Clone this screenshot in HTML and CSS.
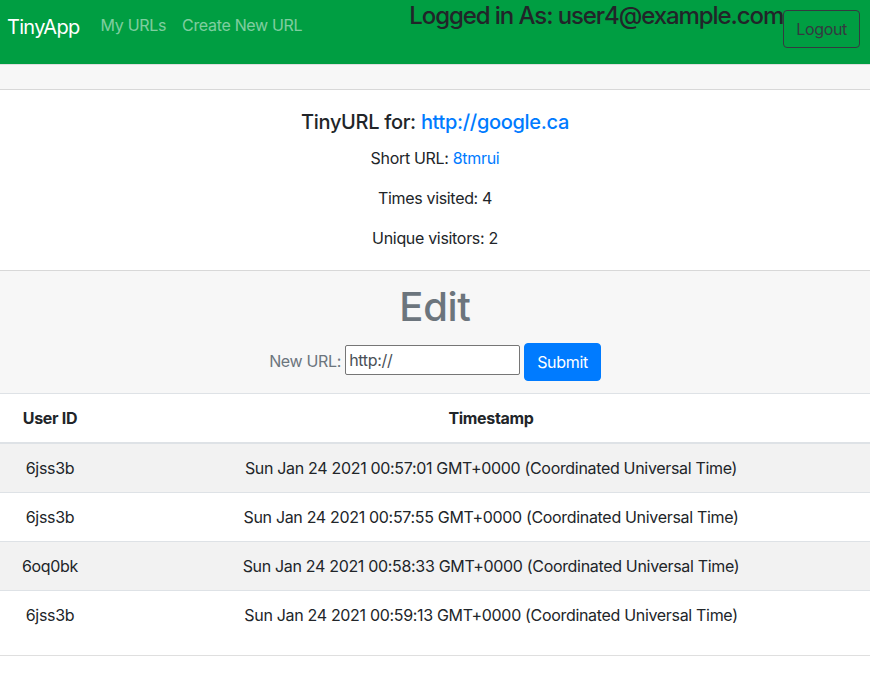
FILE: index.html
```html
<!DOCTYPE html>
<html lang="en">
<head>
<meta charset="utf-8">
<title>TinyApp</title>
<link rel="stylesheet" href="styles.css">
</head>
<body>
<nav class="navbar">
  <a class="brand" href="#">TinyApp</a>
  <div class="nav-links">
    <a class="nav-link" href="#">My URLs</a>
    <a class="nav-link" href="#">Create New URL</a>
  </div>
  <div class="nav-right">
    <h4 class="logged">Logged in As: user4@example.com</h4>
    <button class="btn btn-outline-dark" type="button">Logout</button>
  </div>
</nav>

<div class="card">
  <div class="card-header"></div>
  <div class="card-body">
    <h5 class="card-title">TinyURL for: <a href="#">http://google.ca</a></h5>
    <p class="card-text">Short URL: <a href="#">8tmrui</a></p>
    <p class="card-text">Times visited: 4</p>
    <p class="card-text">Unique visitors: 2</p>
  </div>
  <div class="card-footer">
    <h1 class="edit-title">Edit</h1>
    <form class="edit-form">
      <label class="edit-label" for="newurl">New URL:</label>
      <input id="newurl" class="url-input" type="text" value="http://">
      <button class="btn btn-primary" type="submit">Submit</button>
    </form>
  </div>
  <table class="table">
    <thead>
      <tr><th class="col-user">User ID</th><th class="col-time">Timestamp</th></tr>
    </thead>
    <tbody>
      <tr class="striped"><td class="col-user">6jss3b</td><td class="col-time">Sun Jan 24 2021 00:57:01 GMT+0000 (Coordinated Universal Time)</td></tr>
      <tr><td class="col-user">6jss3b</td><td class="col-time">Sun Jan 24 2021 00:57:55 GMT+0000 (Coordinated Universal Time)</td></tr>
      <tr class="striped"><td class="col-user">6oq0bk</td><td class="col-time">Sun Jan 24 2021 00:58:33 GMT+0000 (Coordinated Universal Time)</td></tr>
      <tr><td class="col-user">6jss3b</td><td class="col-time">Sun Jan 24 2021 00:59:13 GMT+0000 (Coordinated Universal Time)</td></tr>
    </tbody>
  </table>
</div>
</body>
</html>
```

FILE: styles.css
```css
* { box-sizing: border-box; }

html, body {
  margin: 0;
  padding: 0;
}

body {
  font-family: Inter, "Liberation Sans", sans-serif;
  font-size: 16px;
  line-height: 1.5;
  letter-spacing: -0.02em;
  color: #212529;
  background: #fff;
  overflow-x: hidden;
}

a { color: #007bff; text-decoration: none; }

/* Navbar */
.navbar {
  display: flex;
  align-items: flex-start;
  height: 64px;
  padding: 0 10px 0 7px;
  background: #009e42;
}

.brand {
  color: #fff;
  font-size: 20px;
  line-height: 30px;
  letter-spacing: -0.035em;
  margin-top: 12px;
  margin-right: 13px;
  white-space: nowrap;
}

.nav-links {
  display: flex;
  margin-top: 13px;
}

.nav-link {
  color: rgba(255, 255, 255, 0.5);
  padding: 0 8px;
  line-height: 24px;
  white-space: nowrap;
}

.nav-right {
  margin-left: auto;
  display: flex;
  align-items: flex-start;
}

.logged {
  margin: 2px 0 0;
  font-size: 24px;
  font-weight: 500;
  line-height: 28.8px;
  letter-spacing: -0.045em;
  color: #212529;
  white-space: nowrap;
}

.btn {
  display: inline-block;
  font-family: inherit;
  font-size: 16px;
  line-height: 24px;
  letter-spacing: inherit;
  padding: 6px 12px;
  border: 1px solid transparent;
  border-radius: 4px;
  cursor: pointer;
}

.btn-outline-dark {
  margin-top: 10px;
  color: #343a40;
  background: transparent;
  border-color: #343a40;
}

.btn-primary {
  color: #fff;
  background: #007bff;
  border-color: #007bff;
}

/* Card */
.card {
  border-top: 1px solid rgba(0, 0, 0, 0.125);
  border-bottom: 1px solid rgba(0, 0, 0, 0.125);
}

.card-header {
  height: 25px;
  background: #f7f7f7;
  border-bottom: 1px solid rgba(0, 0, 0, 0.125);
}

.card-body {
  padding: 20px;
  text-align: center;
}

.card-title {
  margin: 0 0 12px;
  font-size: 20px;
  font-weight: 500;
  line-height: 24px;
}

.card-text {
  margin: 0 0 16px;
}

.card-text:last-child { margin-bottom: 0; }

.card-footer {
  padding: 12px 20px;
  background: #f7f7f7;
  border-top: 1px solid rgba(0, 0, 0, 0.125);
  text-align: center;
}

.edit-title {
  margin: 0 0 12px;
  font-size: 40px;
  font-weight: 500;
  line-height: 48px;
  color: #6c757d;
}

.edit-form {
  display: flex;
  justify-content: center;
  align-items: center;
  gap: 4px;
}

.edit-label {
  color: #6c757d;
  margin-bottom: 2px;
}

.url-input {
  width: 175px;
  height: 30px;
  margin-bottom: 4px;
  padding: 1px 3px;
  font-family: inherit;
  font-size: 16px;
  letter-spacing: inherit;
  color: #495057;
  border: 1px solid #767676;
  border-radius: 2px;
  background: #fff;
}

/* Table */
.table {
  width: 100%;
  border-collapse: collapse;
  margin-bottom: 16px;
}

.table th,
.table td {
  padding: 12px;
  border-top: 1px solid #dee2e6;
  text-align: center;
  vertical-align: top;
}

.table thead th {
  border-bottom: 2px solid #dee2e6;
  font-weight: 700;
  vertical-align: bottom;
}

.col-user { width: 100px; }

.col-time { padding-left: 24px !important; }

.striped { background: rgba(0, 0, 0, 0.05); }
```
